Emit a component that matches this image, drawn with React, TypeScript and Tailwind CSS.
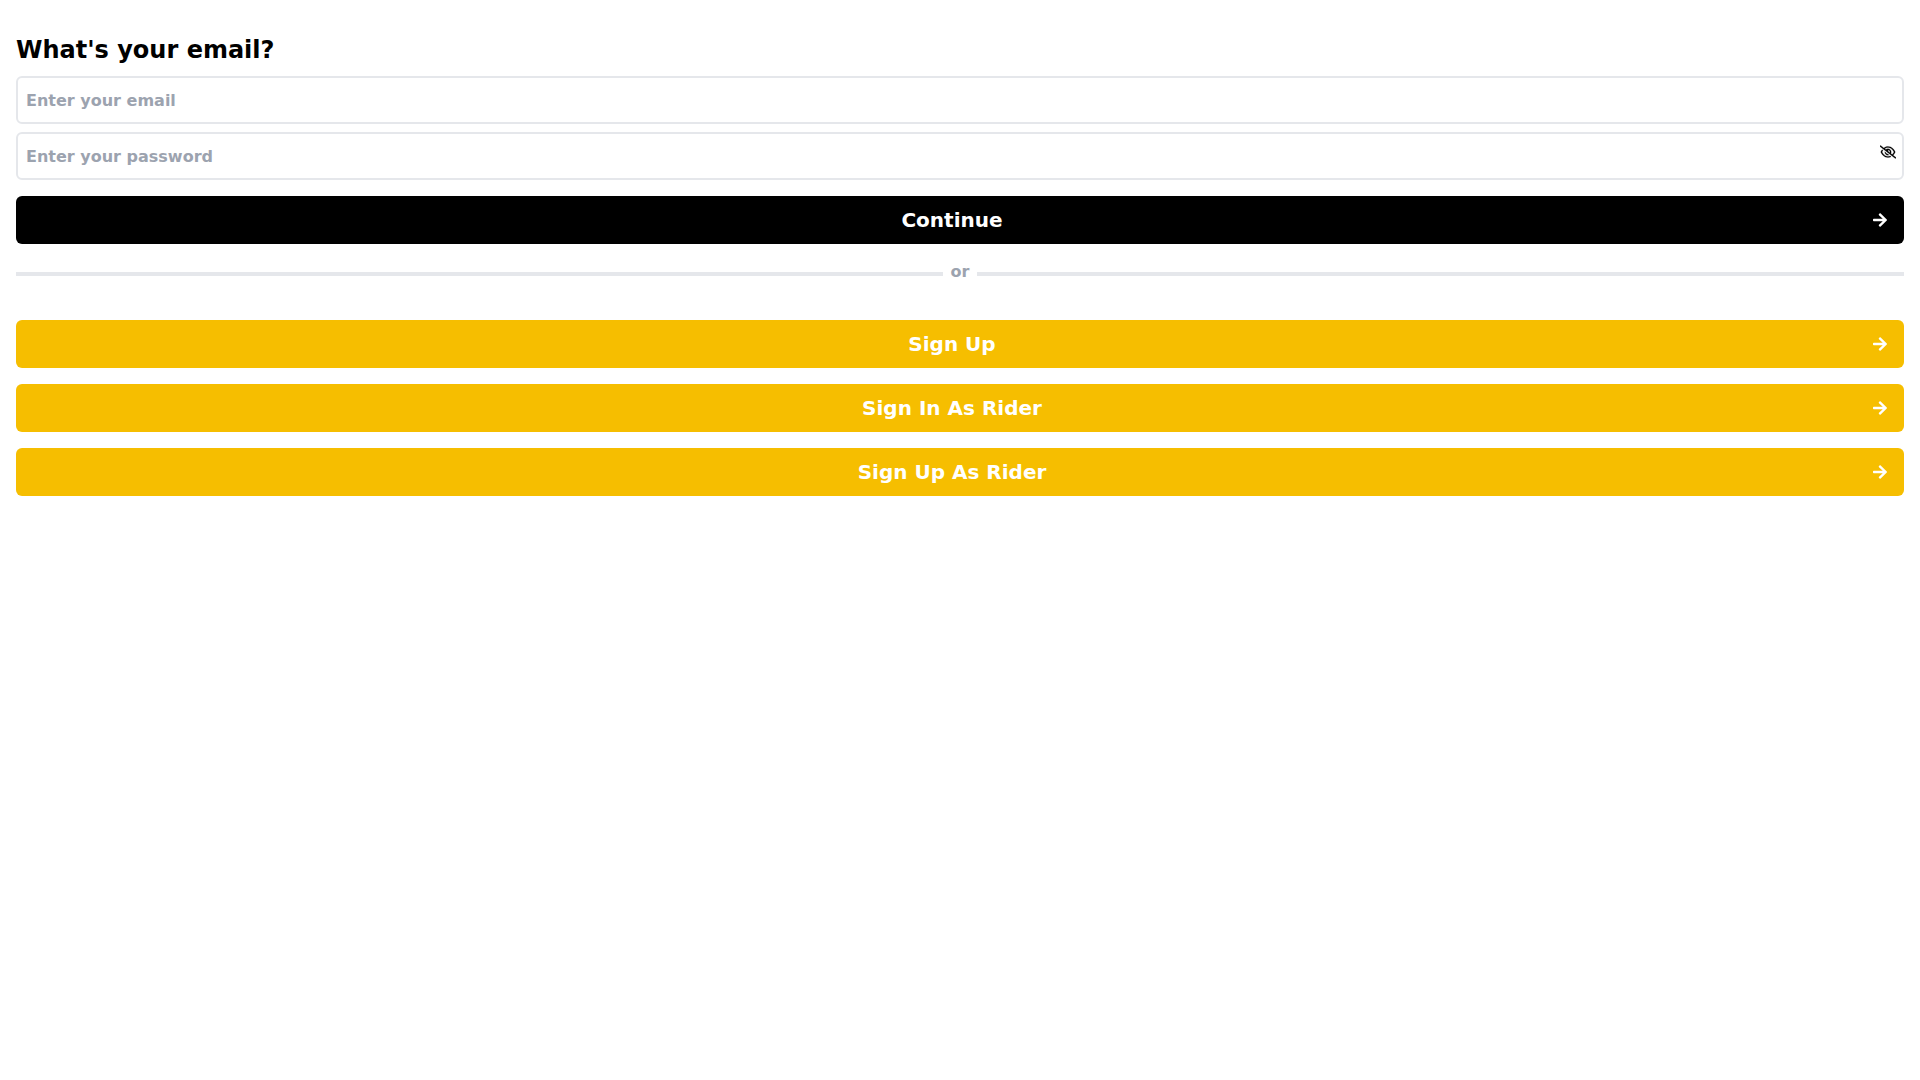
import { useState } from 'react';
import { FaArrowRight } from 'react-icons/fa';
import { FaRegEye, FaRegEyeSlash } from 'react-icons/fa6';

const fieldStyles =
  'block h-12 w-full rounded-md border-2 border-[#e5e7eb] px-2 font-bold text-black placeholder:text-[#9ca3af]';

const buttonStyles =
  'flex h-12 w-full items-center rounded-md px-4 text-xl font-bold text-white';

const links = [
  { label: 'Sign Up', href: '#sign-up' },
  { label: 'Sign In As Rider', href: '#rider-sign-in' },
  { label: 'Sign Up As Rider', href: '#rider-sign-up' },
];

function Arrow() {
  return <FaArrowRight className="size-4 shrink-0" aria-hidden="true" />;
}

export default function App() {
  const [email, setEmail] = useState('');
  const [password, setPassword] = useState('');
  const [showPassword, setShowPassword] = useState(false);

  return (
    <main className="min-h-screen bg-white px-4 py-8 font-['DejaVu_Sans',sans-serif]">
      <form onSubmit={(e) => e.preventDefault()}>
        <h1 className="mb-2 text-2xl/9 font-bold text-black">What's your email?</h1>

        <input
          type="email"
          aria-label="Email"
          placeholder="Enter your email"
          value={email}
          onChange={(e) => setEmail(e.target.value)}
          className={fieldStyles}
        />

        <div className="relative mt-2">
          <input
            type={showPassword ? 'text' : 'password'}
            aria-label="Password"
            placeholder="Enter your password"
            value={password}
            onChange={(e) => setPassword(e.target.value)}
            className={fieldStyles}
          />
          <button
            type="button"
            aria-label={showPassword ? 'Hide password' : 'Show password'}
            onClick={() => setShowPassword(!showPassword)}
            className="absolute top-3 right-2 text-black"
          >
            {showPassword ? (
              <FaRegEye className="size-4" />
            ) : (
              <FaRegEyeSlash className="size-4 [stroke-width:10px]" />
            )}
          </button>
        </div>

        <button type="submit" className={`${buttonStyles} mt-4 bg-black`}>
          <span className="flex-1 text-center">Continue</span>
          <Arrow />
        </button>
      </form>

      <div className="mt-4 flex items-start">
        <div className="mt-3 h-1 flex-1 bg-[#e5e7eb]" />
        <span className="px-2 font-bold text-[#9ca3af]">or</span>
        <div className="mt-3 h-1 flex-1 bg-[#e5e7eb]" />
      </div>

      <nav className="mt-9 flex flex-col gap-4">
        {links.map((link) => (
          <a key={link.href} href={link.href} className={`${buttonStyles} bg-[#f6be00]`}>
            <span className="flex-1 text-center">{link.label}</span>
            <Arrow />
          </a>
        ))}
      </nav>
    </main>
  );
}
